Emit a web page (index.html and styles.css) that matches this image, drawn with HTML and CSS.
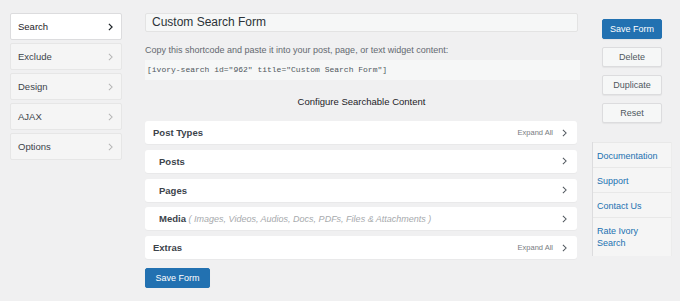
FILE: index.html
```html
<!DOCTYPE html>
<html>
  <head>
    <meta charset="utf-8" />
    <title>Ivory Search</title>
    <link rel="stylesheet" href="styles.css">
  </head>
  <body>
    <div class="page">
      <ul class="tabs">
        <li class="tab tab-active">Search
          <svg class="chevron" viewBox="0 0 6 10"><polyline points="1,1 5,5 1,9" /></svg>
        </li>
        <li class="tab">Exclude
          <svg class="chevron" viewBox="0 0 6 10"><polyline points="1,1 5,5 1,9" /></svg>
        </li>
        <li class="tab">Design
          <svg class="chevron" viewBox="0 0 6 10"><polyline points="1,1 5,5 1,9" /></svg>
        </li>
        <li class="tab">AJAX
          <svg class="chevron" viewBox="0 0 6 10"><polyline points="1,1 5,5 1,9" /></svg>
        </li>
        <li class="tab">Options
          <svg class="chevron" viewBox="0 0 6 10"><polyline points="1,1 5,5 1,9" /></svg>
        </li>
      </ul>

      <div class="main">
        <div class="title-field">Custom Search Form</div>
        <p class="hint">Copy this shortcode and paste it into your post, page, or text widget content:</p>
        <div class="shortcode">[ivory-search id="962" title="Custom Search Form"]</div>
        <h3 class="section-title">Configure Searchable Content</h3>

        <div class="panel">
          <span class="panel-name">Post Types</span>
          <span class="expand">Expand All</span>
          <svg class="chevron" viewBox="0 0 6 10"><polyline points="1,1 5,5 1,9" /></svg>
        </div>
        <div class="panel panel-sub">
          <span class="panel-name">Posts</span>
          <svg class="chevron" viewBox="0 0 6 10"><polyline points="1,1 5,5 1,9" /></svg>
        </div>
        <div class="panel panel-sub">
          <span class="panel-name">Pages</span>
          <svg class="chevron" viewBox="0 0 6 10"><polyline points="1,1 5,5 1,9" /></svg>
        </div>
        <div class="panel panel-sub">
          <span class="panel-name">Media <em class="note">( Images, Videos, Audios, Docs, PDFs, Files &amp; Attachments )</em></span>
          <svg class="chevron" viewBox="0 0 6 10"><polyline points="1,1 5,5 1,9" /></svg>
        </div>
        <div class="panel">
          <span class="panel-name">Extras</span>
          <span class="expand">Expand All</span>
          <svg class="chevron" viewBox="0 0 6 10"><polyline points="1,1 5,5 1,9" /></svg>
        </div>

        <button class="button button-primary">Save Form</button>
      </div>

      <div class="sidebar">
        <div class="actions">
          <button class="button button-primary">Save Form</button>
          <button class="button">Delete</button>
          <button class="button">Duplicate</button>
          <button class="button">Reset</button>
        </div>
        <ul class="links">
          <li><a href="#">Documentation</a></li>
          <li><a href="#">Support</a></li>
          <li><a href="#">Contact Us</a></li>
          <li><a href="#">Rate Ivory Search</a></li>
        </ul>
      </div>
    </div>
  </body>
</html>
```

FILE: styles.css
```css
* {
  margin: 0;
  padding: 0;
  box-sizing: border-box;
}
body {
  background: #f0f0f1;
  font-family: "Liberation Sans", Arial, sans-serif;
  color: #1d2327;
  font-size: 9px;
}
.page {
  display: flex;
  align-items: flex-start;
  padding: 13px 0 0 10px;
}
.tabs {
  list-style: none;
  width: 112px;
  display: flex;
  flex-direction: column;
  gap: 3px;
}
.tab {
  height: 27px;
  display: flex;
  align-items: center;
  justify-content: space-between;
  padding: 0 8px 0 7px;
  background: #f5f5f5;
  border: 1px solid #e6e6e6;
  border-radius: 2px;
  font-size: 9.5px;
  color: #3c434a;
}
.tab .chevron {
  stroke: #b5b5b5;
}
.tab-active {
  background: white;
  border-color: #dcdcde;
  color: #1d2327;
}
.tab-active .chevron {
  stroke: #1d2327;
  stroke-width: 1.5;
}
.chevron {
  width: 5px;
  height: 8px;
  fill: none;
  stroke: #50575e;
  stroke-width: 1.3;
}
.main {
  width: 433px;
  margin-left: 23px;
  display: flex;
  flex-direction: column;
}
.title-field {
  height: 19px;
  background: #f6f7f7;
  border: 1px solid #e3e3e3;
  border-radius: 2px;
  padding: 0 6px;
  font-size: 12px;
  line-height: 17px;
  color: #2c3338;
}
.hint {
  margin-top: 13px;
  color: #646970;
  font-size: 9px;
  line-height: 11px;
}
.shortcode {
  margin-top: 4px;
  height: 20px;
  width: 435px;
  background: #f6f7f7;
  font-family: "Liberation Mono", "Courier New", monospace;
  font-size: 8px;
  line-height: 20px;
  padding: 0 2px;
  color: #50575e;
}
.section-title {
  margin: 16px 0 13px;
  text-align: center;
  font-weight: normal;
  font-size: 9.5px;
  line-height: 12px;
}
.panel {
  height: 23px;
  margin-bottom: 5.75px;
  width: 432px;
  display: flex;
  align-items: center;
  padding: 0 8px 0 8px;
  background: white;
  border-radius: 3px;
  box-shadow: 0 1px 1px rgba(0, 0, 0, 0.03);
}
.panel-sub {
  padding-left: 14px;
}
.panel-name {
  flex: 1;
  font-size: 9.5px;
  font-weight: bold;
  color: #3c434a;
}
.note {
  font-weight: normal;
  color: #a7aaad;
  font-size: 9px;
}
.expand {
  font-size: 7.5px;
  color: #787c82;
  margin-right: 9px;
}
.panel .chevron {
  margin-right: 2px;
}
.button {
  height: 20px;
  width: 60px;
  font-family: inherit;
  font-size: 9px;
  color: #50575e;
  background: #f6f7f7;
  border: 1px solid #dcdcde;
  border-radius: 2px;
  box-shadow: 0 1px 1px rgba(0, 0, 0, 0.05);
}
.button-primary {
  background: #2271b1;
  border-color: #2271b1;
  color: white;
}
.main .button-primary {
  margin-top: 3px;
  width: 65px;
}
.sidebar {
  width: 80px;
  margin-left: 14px;
  margin-top: 6px;
}
.actions {
  display: flex;
  flex-direction: column;
  align-items: center;
  gap: 8px;
}
.links {
  list-style: none;
  margin-top: 19px;
  background: #f5f5f5;
  border-left: 1px solid #dcdcde;
  border-right: 1px solid #ececec;
  font-size: 9px;
}
.links li {
  padding: 7px 8px 5px 4px;
  line-height: 12px;
  border-bottom: 1px solid #e8e8e8;
}
.links li:first-child {
  border-top: 1px solid #e8e8e8;
}
.links li:last-child {
  padding-bottom: 7px;
  border-bottom: none;
}
.links a {
  color: #2271b1;
  text-decoration: none;
}
```
